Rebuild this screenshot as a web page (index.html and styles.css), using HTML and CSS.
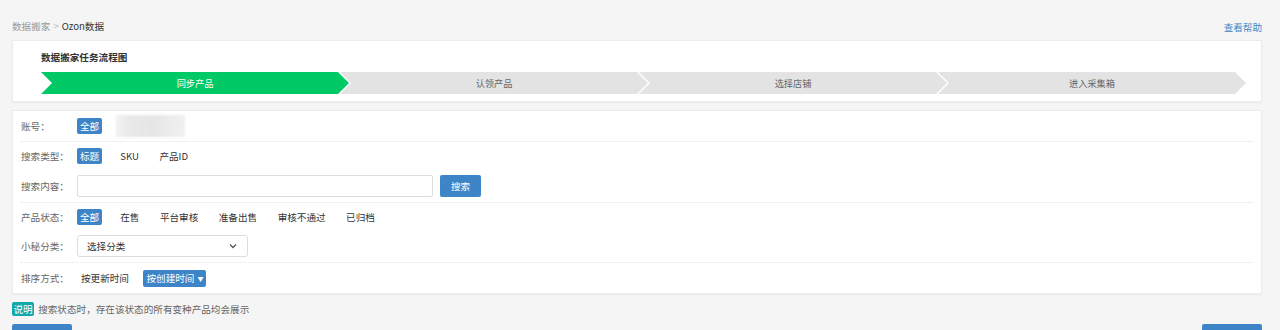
FILE: index.html
```html
<!DOCTYPE html>
<html>
<head>
    <title>Ozon数据</title>
    <link rel="stylesheet" href="styles.css">
</head>
<body>
    <div class="top-bar">
        <div class="crumbs"><span class="crumb-muted">数据搬家</span><span class="crumb-sep">&gt;</span><span>Ozon数据</span></div>
        <a class="help-link" href="#">查看帮助</a>
    </div>

    <div class="panel flow-panel">
        <div class="flow-title">数据搬家任务流程图</div>
        <div class="steps">
            <div class="step active">同步产品</div>
            <div class="step">认领产品</div>
            <div class="step">选择店铺</div>
            <div class="step">进入采集箱</div>
        </div>
    </div>

    <div class="panel filter-panel">
        <div class="row line">
            <span class="label">账号：</span>
            <span class="tag">全部</span>
            <span class="blurred"></span>
        </div>
        <div class="row row-tight">
            <span class="label">搜索类型：</span>
            <span class="tag">标题</span>
            <span class="opt">SKU</span>
            <span class="opt">产品ID</span>
        </div>
        <div class="row row-input line">
            <span class="label">搜索内容：</span>
            <input class="text-input" type="text">
            <button class="btn-search">搜索</button>
        </div>
        <div class="row row-short">
            <span class="label">产品状态：</span>
            <span class="tag">全部</span>
            <span class="opt">在售</span>
            <span class="opt">平台审核</span>
            <span class="opt">准备出售</span>
            <span class="opt">审核不通过</span>
            <span class="opt">已归档</span>
        </div>
        <div class="row row-input line">
            <span class="label">小秘分类：</span>
            <div class="select">
                <span>选择分类</span>
                <svg width="8" height="6" viewBox="0 0 8 6"><path d="M1 1.5 L4 4.5 L7 1.5" fill="none" stroke="#555" stroke-width="1.3"/></svg>
            </div>
        </div>
        <div class="row">
            <span class="label">排序方式：</span>
            <span class="opt sort-first">按更新时间</span>
            <span class="tag tag-sort">按创建时间<span class="caret">▼</span></span>
        </div>
    </div>

    <div class="note">
        <span class="note-tag">说明</span>
        <span>搜索状态时，存在该状态的所有变种产品均会展示</span>
    </div>

    <div class="actions">
        <button class="btn-blue"></button>
        <button class="btn-blue"></button>
    </div>
</body>
</html>
```

FILE: styles.css
```css
body {
    margin: 0;
    padding: 0 18px 0 12px;
    background: #f5f5f5;
    font-family: "Noto Sans CJK SC", "Liberation Sans", sans-serif;
    font-size: 9.6px;
    color: #333;
    overflow: hidden;
}
.top-bar {
    display: flex;
    justify-content: space-between;
    align-items: flex-end;
    height: 40px;
    padding-bottom: 6px;
    box-sizing: border-box;
    line-height: 14px;
}
.crumbs {
    color: #333;
    margin-bottom: 1px;
}
.crumb-muted {
    color: #999;
}
.crumb-sep {
    color: #bbb;
    margin: 0 3px;
}
.help-link {
    color: #3d85c6;
    text-decoration: none;
}
.panel {
    background: #fff;
    border: 1px solid #ececec;
    box-shadow: 0 1px 2px rgba(0, 0, 0, 0.05);
}
.flow-panel {
    height: 62px;
    box-sizing: border-box;
    padding: 9px 0 0 28px;
}
.flow-title {
    font-weight: bold;
    line-height: 14px;
    color: #333;
}
.steps {
    display: flex;
    margin-top: 8px;
}
.step {
    width: 308px;
    height: 22px;
    line-height: 22px;
    text-align: center;
    font-size: 9.2px;
    color: #666;
    background: #e3e3e3;
    clip-path: polygon(0 0, calc(100% - 11px) 0, 100% 50%, calc(100% - 11px) 100%, 0 100%, 11px 50%);
    flex-shrink: 0;
}
.step + .step {
    margin-left: -9px;
}
.step.active {
    background: #00c965;
    color: #fff;
}
.filter-panel {
    margin-top: 8px;
    padding: 0 8px;
}
.row {
    display: flex;
    align-items: center;
    height: 30px;
}
.row-tight {
    height: 28px;
}
.row-input {
    height: 32px;
}
.row-short {
    height: 27px;
}
.line {
    border-bottom: 1px dotted #e4e4e4;
}
.label {
    width: 56px;
    color: #666;
    flex-shrink: 0;
}
.tag {
    background: #3d85c6;
    color: #fff;
    line-height: 16px;
    padding: 0 3px;
    border-radius: 2px;
    margin-right: 18px;
}
.opt {
    color: #333;
    margin-right: 20.5px;
}
.sort-first {
    margin-left: 4px;
}
.tag-sort {
    margin-left: -6px;
    padding: 0 3px;
}
.caret {
    font-size: 6px;
    margin-left: 3px;
    vertical-align: 1px;
}
.blurred {
    width: 69px;
    height: 22px;
    margin-left: -4px;
    background: linear-gradient(90deg, #f2f2f2 0, #e9e9e9 20%, #e6e6e6 55%, #ececec 80%, #f0f0f0 100%);
    filter: blur(1px);
}
.text-input {
    width: 356px;
    height: 22px;
    box-sizing: border-box;
    border: 1px solid #ddd;
    border-radius: 2px;
    margin: 0 7px 0 0;
    padding: 0 6px;
}
.btn-search {
    width: 41px;
    height: 22px;
    border: none;
    border-radius: 2px;
    background: #3d85c6;
    color: #fff;
    font-family: inherit;
    font-size: 9.6px;
    padding: 0;
}
.select {
    width: 171px;
    height: 22px;
    box-sizing: border-box;
    border: 1px solid #ddd;
    border-radius: 3px;
    display: flex;
    align-items: center;
    justify-content: space-between;
    padding: 0 10px 0 9px;
    color: #333;
}
.note {
    display: flex;
    align-items: center;
    margin-top: 8px;
    color: #666;
    line-height: 14px;
}
.note-tag {
    background: #14a9a9;
    color: #fff;
    padding: 0 1.5px;
    border-radius: 2px;
    margin-right: 4px;
}
.actions {
    display: flex;
    justify-content: space-between;
    margin-top: 8px;
}
.btn-blue {
    width: 60px;
    height: 30px;
    border: none;
    border-radius: 2px;
    background: #3d85c6;
}
```
